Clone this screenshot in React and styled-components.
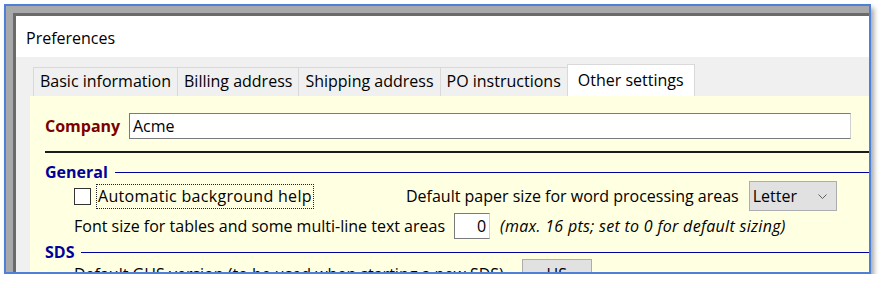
import React from 'react';
import styled, { createGlobalStyle } from 'styled-components';

const GlobalStyle = createGlobalStyle`
  html, body {
    margin: 0;
    padding: 0;
    background: #fff;
  }
  body {
    font-family: "Open Sans", "Noto Sans", sans-serif;
    font-size: 16px;
    color: #000;
  }
`;

const Frame = styled.div`
  box-sizing: border-box;
  margin: 4px 0 0 4px;
  width: 867px;
  height: 270px;
  border: 2px solid #4f80d8;
  background: #a9a9a9;
  padding: 7px 0 0 7px;
  box-shadow: 3px 4px 5px rgba(0, 0, 0, 0.35);
  display: flex;
`;

const Window = styled.div`
  flex: 1;
  display: flex;
  flex-direction: column;
  background: #fff;
  border-top: 3px solid #6b6b6b;
  border-left: 3px solid #6b6b6b;
  overflow: hidden;
`;

const TitleBar = styled.div`
  height: 41px;
  flex-shrink: 0;
  display: flex;
  align-items: center;
  padding: 2px 0 0 10px;
  box-sizing: border-box;
`;

const Body = styled.div`
  flex: 1;
  background: #f0f0f0;
  padding: 7px 0 0 14px;
  display: flex;
  flex-direction: column;
`;

const TabStrip = styled.div`
  display: flex;
  align-items: flex-end;
  height: 32px;
  padding-left: 4px;
  flex-shrink: 0;
`;

const Tab = styled.div`
  box-sizing: border-box;
  height: ${(p) => (p.active ? '32px' : '29px')};
  display: flex;
  align-items: center;
  padding: ${(p) => (p.active ? '0 10px 2px' : '0 6px 2px')};
  margin-left: -1px;
  border: 1px solid #d9d9d9;
  border-bottom: none;
  background: ${(p) => (p.active ? '#fff' : '#f0f0f0')};
  position: relative;
  z-index: ${(p) => (p.active ? 1 : 0)};
  white-space: nowrap;
`;

const Panel = styled.div`
  flex: 1;
  background: #ffffe1;
  padding-left: 15px;
  display: flex;
  flex-direction: column;
`;

const CompanyRow = styled.div`
  display: flex;
  align-items: center;
  height: 26px;
  margin-top: 17px;
`;

const CompanyLabel = styled.div`
  width: 84px;
  font-weight: 700;
  color: #7b0000;
`;

const TextBox = styled.div`
  box-sizing: border-box;
  width: ${(p) => p.width}px;
  height: 26px;
  margin-left: ${(p) => p.gap || 0}px;
  background: #fff;
  border: 1px solid #7a7a7a;
  border-right-color: #d0d0d0;
  display: flex;
  align-items: center;
  justify-content: ${(p) => (p.right ? 'flex-end' : 'flex-start')};
  padding: 0 3px;
`;

const HeavyRule = styled.div`
  height: 2px;
  background: #1c1c1c;
  margin-top: 12px;
`;

const SectionHead = styled.div`
  display: flex;
  align-items: center;
  gap: 7px;
  height: 20px;
  margin-top: ${(p) => p.top}px;
  font-weight: 700;
  color: #00009a;
  &::after {
    content: '';
    flex: 1;
    height: 1px;
    background: #00009a;
  }
`;

const Row = styled.div`
  display: flex;
  align-items: center;
  height: ${(p) => p.h || 30}px;
  margin-top: ${(p) => p.top || 0}px;
  padding-left: 29px;
  white-space: nowrap;
  flex-shrink: 0;
`;

const CheckGroup = styled.div`
  width: 332px;
  display: flex;
  align-items: center;
`;

const CheckBox = styled.div`
  box-sizing: border-box;
  width: 17px;
  height: 17px;
  border: 1px solid #333;
  background: #fff;
`;

const FocusLabel = styled.span`
  margin-left: 5px;
  padding: 0 1px 1px;
  letter-spacing: 0.3px;
  border: 1px dotted #222;
`;

const Select = styled.div`
  box-sizing: border-box;
  width: 88px;
  height: 30px;
  margin-left: 10px;
  background: #e1e1e1;
  border: 1px solid #adadad;
  display: flex;
  align-items: center;
  justify-content: space-between;
  padding: 0 9px 0 3px;
`;

const Hint = styled.span`
  font-style: italic;
  letter-spacing: 0.3px;
  margin-left: 10px;
`;

const Button = styled.div`
  box-sizing: border-box;
  width: 70px;
  height: 30px;
  margin-left: 18px;
  background: #e1e1e1;
  border: 1px solid #adadad;
  display: flex;
  align-items: center;
  justify-content: center;
`;

const tabs = ['Basic information', 'Billing address', 'Shipping address', 'PO instructions', 'Other settings'];

export default function App() {
  return (
    <>
      <GlobalStyle />
      <Frame>
        <Window>
          <TitleBar>Preferences</TitleBar>
          <Body>
            <TabStrip>
              {tabs.map((t, i) => (
                <Tab key={t} active={i === tabs.length - 1}>{t}</Tab>
              ))}
            </TabStrip>
            <Panel>
              <CompanyRow>
                <CompanyLabel>Company</CompanyLabel>
                <TextBox width={722}>Acme</TextBox>
              </CompanyRow>
              <HeavyRule />
              <SectionHead top={9}>General</SectionHead>
              <Row top={-1}>
                <CheckGroup>
                  <CheckBox />
                  <FocusLabel>Automatic background help</FocusLabel>
                </CheckGroup>
                <span>Default paper size for word processing areas</span>
                <Select>
                  <span>Letter</span>
                  <svg width="9" height="5" viewBox="0 0 9 5">
                    <path d="M0.5 0.5 L4.5 4.5 L8.5 0.5" fill="none" stroke="#606060" strokeWidth="1" />
                  </svg>
                </Select>
              </Row>
              <Row h={26} top={2}>
                <span>Font size for tables and some multi-line text areas</span>
                <TextBox width={36} gap={9} right>0</TextBox>
                <Hint>(max. 16 pts; set to 0 for default sizing)</Hint>
              </Row>
              <SectionHead top={3}>SDS</SectionHead>
              <Row top={-3}>
                <span>Default GHS version (to be used when starting a new SDS)</span>
                <Button>US</Button>
              </Row>
            </Panel>
          </Body>
        </Window>
      </Frame>
    </>
  );
}
